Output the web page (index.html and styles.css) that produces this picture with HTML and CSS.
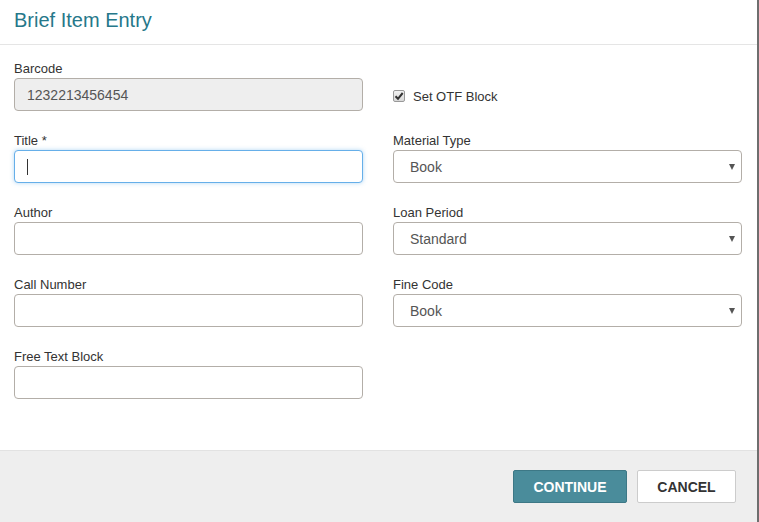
FILE: index.html
```html
<!DOCTYPE html>
<html>
<head>
<meta charset="utf-8">
<link rel="stylesheet" href="styles.css">
</head>
<body>
<div class="page">
  <div class="modal">
    <div class="modal-header">
      <h1 class="modal-title">Brief Item Entry</h1>
    </div>
    <div class="modal-body">
      <div class="grid">
        <div class="group">
          <div class="label">Barcode</div>
          <div class="field disabled">1232213456454</div>
        </div>
        <div class="group check-group">
          <div class="check-row">
            <span class="checkbox">
              <svg width="10" height="10" viewBox="0 0 10 10"><path d="M1.5 5.2 L4 7.8 L8.7 2" fill="none" stroke="#333" stroke-width="2"/></svg>
            </span>
            <span class="check-label">Set OTF Block</span>
          </div>
        </div>

        <div class="group">
          <div class="label">Title *</div>
          <div class="field focus"><span class="caret"></span></div>
        </div>
        <div class="group">
          <div class="label">Material Type</div>
          <div class="field select"><span>Book</span><span class="arrow"></span></div>
        </div>

        <div class="group">
          <div class="label">Author</div>
          <div class="field"></div>
        </div>
        <div class="group">
          <div class="label">Loan Period</div>
          <div class="field select"><span>Standard</span><span class="arrow"></span></div>
        </div>

        <div class="group">
          <div class="label">Call Number</div>
          <div class="field"></div>
        </div>
        <div class="group">
          <div class="label">Fine Code</div>
          <div class="field select"><span>Book</span><span class="arrow"></span></div>
        </div>

        <div class="group">
          <div class="label">Free Text Block</div>
          <div class="field"></div>
        </div>
      </div>
    </div>
    <div class="modal-footer">
      <button class="btn btn-primary">CONTINUE</button>
      <button class="btn btn-default">CANCEL</button>
    </div>
  </div>
  <div class="backdrop"></div>
</div>
</body>
</html>
```
FILE: styles.css
```css
html, body {
  margin: 0;
  padding: 0;
  height: 100%;
}
body {
  font-family: "Liberation Sans", Arial, sans-serif;
  color: #333;
  background: #fff;
}
.page {
  display: flex;
  height: 522px;
  width: 759px;
  overflow: hidden;
}
.modal {
  width: 757px;
  flex: none;
  display: flex;
  flex-direction: column;
  background: #fff;
  border-top-right-radius: 4px;
}
.backdrop {
  flex: 1;
  background: #6e6e6e;
}
.modal-header {
  height: 44px;
  border-bottom: 1px solid #e5e5e5;
  padding: 0 14px;
  display: flex;
  align-items: center;
}
.modal-title {
  margin: 0;
  font-size: 20px;
  font-weight: normal;
  color: #26788a;
  position: relative;
  top: -2px;
}
.modal-body {
  flex: 1;
  padding: 15px 16px 0 14px;
}
.grid {
  display: grid;
  grid-template-columns: 349px 349px;
  column-gap: 30px;
}
.group {
  margin-bottom: 21px;
}
.label {
  font-size: 13px;
  line-height: 17px;
  margin-bottom: 1px;
  color: #333;
}
.field {
  box-sizing: border-box;
  height: 33px;
  border: 1px solid #b3aea8;
  border-radius: 4px;
  background: #fff;
  font-size: 14px;
  color: #555;
  padding: 0 12px;
  display: flex;
  align-items: center;
}
.field.disabled {
  background: #eeeeee;
}
.field.focus {
  border-color: #66afe9;
  box-shadow: 0 0 4px rgba(102, 175, 233, 0.5);
  padding-left: 12px;
}
.caret {
  display: inline-block;
  width: 1px;
  height: 16px;
  background: #333;
}
.field.select {
  justify-content: space-between;
  padding-left: 16px;
  padding-right: 6px;
}
.arrow {
  width: 0;
  height: 0;
  border-left: 3.5px solid transparent;
  border-right: 3.5px solid transparent;
  border-top: 6px solid #555;
}
.check-group {
  display: flex;
  align-items: center;
  padding-top: 21px;
  box-sizing: border-box;
  height: 51px;
}
.check-row {
  display: flex;
  align-items: center;
}
.checkbox {
  box-sizing: border-box;
  width: 12px;
  height: 12px;
  border: 1px solid #999;
  border-radius: 2px;
  background: linear-gradient(#f2f2f2, #d8d8d8);
  display: flex;
  align-items: center;
  justify-content: center;
  margin-right: 8px;
}
.check-label {
  font-size: 13px;
  color: #333;
}
.modal-footer {
  height: 72px;
  box-sizing: border-box;
  border-top: 1px solid #e2e2e2;
  background: #eeeeee;
  display: flex;
  justify-content: flex-end;
  align-items: flex-start;
  padding: 19px 21px 0 0;
  gap: 10px;
}
.btn {
  height: 33px;
  border-radius: 2px;
  font-family: "Liberation Sans", Arial, sans-serif;
  font-size: 14px;
  font-weight: bold;
  cursor: pointer;
}
.btn-primary {
  width: 114px;
  background: #4a8c9b;
  border: 1px solid #3d7886;
  color: #fff;
}
.btn-default {
  width: 99px;
  background: #fff;
  border: 1px solid #ccc;
  color: #333;
}
```
